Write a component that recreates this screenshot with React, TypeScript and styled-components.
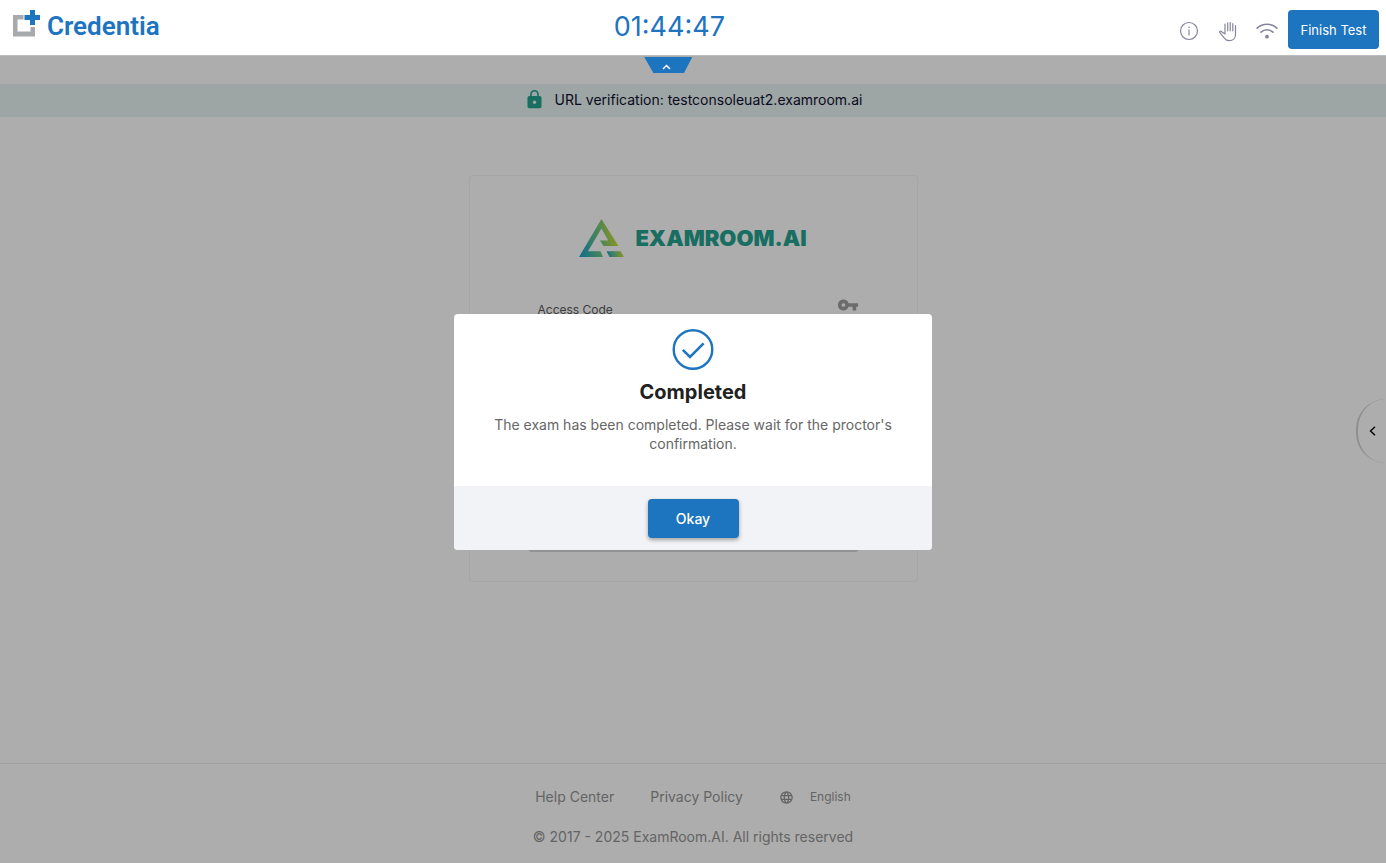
import React from "react";
import styled, { createGlobalStyle } from "styled-components";
import { MdLock, MdVpnKey, MdLanguage } from "react-icons/md";

const BLUE = "#1d74bf";

const GlobalStyle = createGlobalStyle`
  *, *::before, *::after { box-sizing: border-box; }
  body {
    margin: 0;
    background: #ffffff;
    font-family: Inter, "Liberation Sans", sans-serif;
    color: #212121;
  }
  button, input { font: inherit; }
  svg { display: block; flex: none; }
`;

const Page = styled.div`
  display: flex;
  flex-direction: column;
  min-height: 100vh;
`;

const Header = styled.header`
  position: relative;
  z-index: 3;
  display: grid;
  grid-template-columns: 13fr auto 14fr;
  height: 56px;
  background: #ffffff;
  border-bottom: 1px solid #bdbdbd;
`;

const Brand = styled.a`
  display: flex;
  align-items: flex-start;
  gap: 6px;
  padding: 10px 0 0 13px;
  color: ${BLUE};
  text-decoration: none;
`;

const BrandName = styled.span`
  font-family: Roboto, sans-serif;
  font-size: 26px;
  font-weight: 600;
  line-height: 32px;
`;

const Timer = styled.time`
  color: ${BLUE};
  font-size: 27px;
  line-height: 54px;
`;

const Actions = styled.div`
  display: flex;
  justify-content: flex-end;
  align-items: center;
  gap: 10px;
  padding: 4px 7px 0 0;
`;

const IconGroup = styled.div`
  display: flex;
  gap: 17px;
  padding-top: 3px;
`;

const IconButton = styled.button`
  display: flex;
  align-items: center;
  justify-content: center;
  width: 22px;
  height: 22px;
  padding: 0;
  border: 0;
  background: none;
  color: #85859a;
`;

const PrimaryButton = styled.button<{ $raised?: boolean }>`
  height: 39px;
  min-width: 91px;
  padding: 0 12px;
  border: 0;
  border-radius: 4px;
  background: ${BLUE};
  color: #ffffff;
  font-size: ${(p) => (p.$raised ? 14 : 13)}px;
  font-weight: ${(p) => (p.$raised ? 500 : 400)};
  white-space: nowrap;
  box-shadow: ${(p) => (p.$raised ? "0 2px 4px rgba(0, 0, 0, 0.35)" : "none")};
`;

const TabRow = styled.div`
  position: relative;
  z-index: 3;
  display: grid;
  grid-template-columns: 13fr auto 14fr;
  height: 28px;
  padding-top: 1px;
`;

const CollapseTab = styled.button`
  grid-column: 2;
  display: flex;
  align-items: center;
  justify-content: center;
  width: 48px;
  height: 16px;
  padding: 3px 4px 0 0;
  border: 0;
  background: ${BLUE};
  color: #ffffff;
  clip-path: polygon(0 0, 100% 0, 83% 100%, 19% 100%);
`;

const UrlBand = styled.div`
  display: flex;
  align-items: center;
  justify-content: center;
  gap: 10px;
  height: 33px;
  padding-bottom: 2px;
  background: #e9f5f3;
  color: #0e1030;
  font-size: 14px;
  svg { color: #22a28f; }
`;

const Main = styled.main`
  display: flex;
  flex: 1;
  justify-content: center;
  align-items: flex-start;
  padding: 58px 16px;
`;

const AccessCard = styled.form`
  display: flex;
  flex-direction: column;
  width: 449px;
  height: 407px;
  padding: 43px 58px 29px;
  border: 1px solid #f5f5f5;
  border-radius: 4px;
`;

const ExamLogo = styled.div`
  display: flex;
  align-items: center;
  justify-content: center;
  gap: 10px;
  color: #22a28f;
  font-size: 22px;
  font-weight: 900;
`;

const FieldHead = styled.div`
  display: flex;
  align-items: flex-start;
  justify-content: space-between;
  margin-top: 37px;
  padding-left: 10px;
  font-size: 12px;
  line-height: 32px;
  color: #5c5c5c;
  svg { color: #a0a0a0; }
`;

const CodeInput = styled.input`
  width: 100%;
  height: 36px;
  padding: 0 10px;
  border: 0;
  border-bottom: 1px solid #8c8c8c;
  background: none;
`;

const SubmitButton = styled.button`
  height: 38px;
  margin-top: auto;
  border: 0;
  border-radius: 4px;
  background: #d8d8d8;
`;

const DrawerHandle = styled.button`
  position: fixed;
  top: 50%;
  right: 0;
  display: flex;
  align-items: center;
  justify-content: center;
  width: 30px;
  height: 64px;
  margin-top: -33px;
  padding: 0;
  border: 0;
  border-left: 2px solid #d0d0d8;
  border-radius: 32px 0 0 32px;
  background: none;
  color: #000000;
`;

const Footer = styled.footer`
  display: flex;
  flex-direction: column;
  align-items: center;
  gap: 20px;
  padding: 23px 16px 16px;
  border-top: 1px solid #ececec;
  color: #949494;
  font-size: 14px;
  line-height: 20px;
`;

const FooterLinks = styled.nav`
  display: flex;
  align-items: center;
  gap: 36px;
`;

const FooterLink = styled.a`
  color: inherit;
  text-decoration: none;
`;

const Language = styled.button`
  display: flex;
  align-items: center;
  gap: 16px;
  padding: 0;
  border: 0;
  background: none;
  color: inherit;
  font-size: 12px;
`;

const Copyright = styled.p`
  margin: 0;
`;

const Backdrop = styled.div`
  position: fixed;
  inset: 0;
  z-index: 2;
  display: flex;
  align-items: center;
  justify-content: center;
  background: rgba(0, 0, 0, 0.32);
`;

const Dialog = styled.section`
  width: 478px;
  overflow: hidden;
  border-radius: 4px;
  background: #ffffff;
  text-align: center;
`;

const DialogBody = styled.div`
  display: flex;
  flex-direction: column;
  align-items: center;
  padding: 15px 32px 33px;
`;

const DialogTitle = styled.h2`
  margin: 7px 0 9px;
  font-size: 20px;
  font-weight: 700;
  line-height: 28px;
`;

const DialogText = styled.p`
  margin: 0;
  color: #666666;
  font-size: 14px;
  line-height: 19px;
`;

const DialogFooter = styled.div`
  display: flex;
  justify-content: center;
  padding: 13px 0 12px;
  background: #f2f3f6;
`;

function CredentiaMark() {
  return (
    <svg width="28" height="28" viewBox="0 0 28 28">
      <path d="M0 5H10.500V9.500H4.500V21.500H17.500V17H22V26.500H0Z" fill="#a8a9ad" />
      <path d="M17 0H22V5H27V10H22V15H17V10H11.500V5H17Z" fill={BLUE} />
    </svg>
  );
}

function InfoIcon() {
  return (
    <svg width="20" height="20" viewBox="0 0 20 20" fill="none" stroke="currentColor">
      <circle cx="10" cy="10" r="8.500" strokeWidth="1.200" />
      <path d="M10 8.500V14.500" strokeWidth="1.200" />
      <circle cx="10" cy="6.200" r=".8" fill="currentColor" stroke="none" />
    </svg>
  );
}

function HandIcon() {
  return (
    <svg width="20" height="21" viewBox="0 0 20 21" fill="none" stroke="currentColor" strokeWidth="1.200" strokeLinecap="round" strokeLinejoin="round">
      <path d="M7 3.200V13L3.300 10.400C2.100 9.600 1 10.600 1.900 11.700L6.300 17.200C7.600 18.900 9 19.700 11.200 19.700C14.900 19.700 17.500 17.400 17.500 13.700V4.500" />
      <path d="M9.700 1.800V9.800M12.200 1.500V9.800M14.800 2.500V9.800" />
    </svg>
  );
}

function WifiIcon() {
  return (
    <svg width="22" height="18" viewBox="0 0 22 18" fill="none" stroke="currentColor" strokeWidth="1.700" strokeLinecap="round">
      <path d="M1.200 6.200C6.600 .9 15.400 .9 20.800 6.200" />
      <path d="M5 10.200C8.300 6.900 13.700 6.900 17 10.200" />
      <circle cx="11" cy="14.700" r="1.900" fill="currentColor" stroke="none" />
    </svg>
  );
}

function ExamMark() {
  return (
    <svg width="46" height="38" viewBox="0 0 46 38">
      <defs>
        <linearGradient id="exam" gradientUnits="userSpaceOnUse" x1="2" y1="34" x2="40" y2="27">
          <stop offset="0" stopColor="#1fa5cc" />
          <stop offset=".55" stopColor="#70c680" />
          <stop offset="1" stopColor="#d2dc30" />
        </linearGradient>
        <linearGradient id="examFoot" x1="0" y1="0" x2="1" y2="0">
          <stop offset="0" stopColor="#1fa5cc" />
          <stop offset=".5" stopColor="#70c680" />
          <stop offset="1" stopColor="#d2dc30" />
        </linearGradient>
      </defs>
      <path d="M22.500 0L39.500 27H24.500L21 21.500H29.200L22.500 9.500L9 32.300H21.500L24 38H0Z" fill="url(#exam)" />
      <path d="M27.500 32.300H41.600L45 38H30.500Z" fill="url(#examFoot)" />
    </svg>
  );
}

function CompletedIcon() {
  return (
    <svg width="42" height="42" viewBox="0 0 42 42" fill="none" stroke={BLUE} strokeWidth="2.400">
      <circle cx="21" cy="20.500" r="19.300" />
      <path d="M10.800 20.800L18 28L31.600 14.300" strokeWidth="2.500" />
    </svg>
  );
}

export default function App() {
  return (
    <Page>
      <GlobalStyle />
      <Header>
        <Brand href="#">
          <CredentiaMark />
          <BrandName>Credentia</BrandName>
        </Brand>
        <Timer>01:44:47</Timer>
        <Actions>
          <IconGroup>
            <IconButton aria-label="Information"><InfoIcon /></IconButton>
            <IconButton aria-label="Raise hand"><HandIcon /></IconButton>
            <IconButton aria-label="Connection"><WifiIcon /></IconButton>
          </IconGroup>
          <PrimaryButton>Finish Test</PrimaryButton>
        </Actions>
      </Header>
      <TabRow>
        <CollapseTab aria-label="Collapse header">
          <svg width="9" height="6" viewBox="0 0 9 6" fill="none" stroke="currentColor" strokeWidth="1.500">
            <path d="M1 5L4.500 1.500L8 5" />
          </svg>
        </CollapseTab>
      </TabRow>
      <UrlBand>
        <MdLock size={21} />
        <span>URL verification: testconsoleuat2.examroom.ai</span>
      </UrlBand>
      <Main>
        <AccessCard>
          <ExamLogo>
            <ExamMark />
            <span>EXAMROOM.AI</span>
          </ExamLogo>
          <FieldHead>
            <label htmlFor="access-code">Access Code</label>
            <MdVpnKey size={22} />
          </FieldHead>
          <CodeInput id="access-code" />
          <SubmitButton disabled aria-label="Continue" />
        </AccessCard>
      </Main>
      <DrawerHandle aria-label="Open panel">
        <svg width="7" height="10" viewBox="0 0 7 10" fill="none" stroke="currentColor" strokeWidth="1.400">
          <path d="M6 .8L1.500 5L6 9.200" />
        </svg>
      </DrawerHandle>
      <Footer>
        <FooterLinks>
          <FooterLink href="#">Help Center</FooterLink>
          <FooterLink href="#">Privacy Policy</FooterLink>
          <Language>
            <MdLanguage size={15} />
            English
          </Language>
        </FooterLinks>
        <Copyright>© 2017 - 2025 ExamRoom.AI. All rights reserved</Copyright>
      </Footer>
      <Backdrop>
        <Dialog role="dialog" aria-modal="true" aria-labelledby="done-title">
          <DialogBody>
            <CompletedIcon />
            <DialogTitle id="done-title">Completed</DialogTitle>
            <DialogText>
              The exam has been completed. Please wait for the proctor's confirmation.
            </DialogText>
          </DialogBody>
          <DialogFooter>
            <PrimaryButton $raised>Okay</PrimaryButton>
          </DialogFooter>
        </Dialog>
      </Backdrop>
    </Page>
  );
}
